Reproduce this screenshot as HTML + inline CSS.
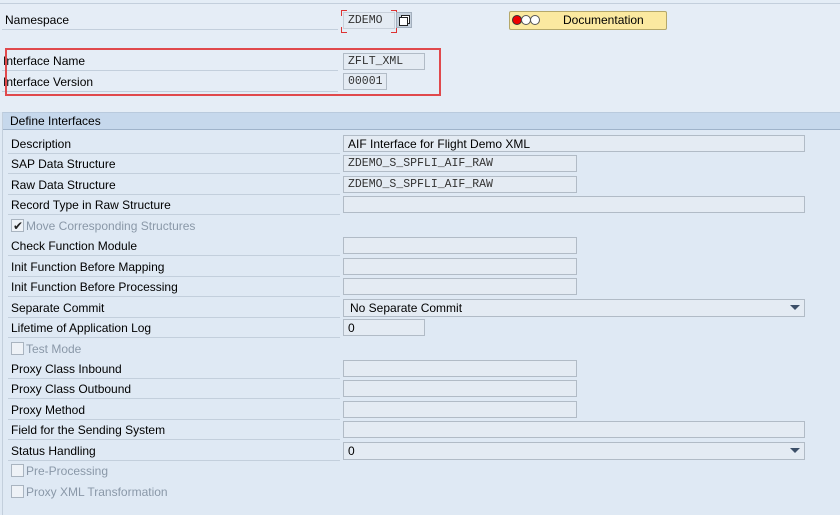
<!DOCTYPE html><html><head><meta charset="utf-8"><style>
body{margin:0;width:840px;height:514px;overflow:hidden;background:#dfe9f4;font-family:"Liberation Sans",sans-serif;font-size:12px;color:#000;position:relative}
.a{position:absolute}
.lbl{position:absolute;left:8px;width:332px;height:19px;line-height:18px;border-bottom:1px solid #c3cfdc;padding-left:3px;box-sizing:border-box}
.top{left:2px;width:336px;padding-left:3px}
.dis{color:#8a98a8;border-bottom:none}
.inp{position:absolute;left:343px;height:16px;background:#e4ebf3;border:1px solid #b1bbc6;box-sizing:border-box;line-height:16px;padding-left:4px;font-size:12px}
.mono{font-family:"Liberation Mono",monospace;font-size:11.5px;color:#333}
.cb{display:inline-block;width:11px;height:11px;border:1px solid #a9b4c0;background:#eef2f7;vertical-align:-2px;margin-right:2px;position:relative}
.dd:after{content:"";position:absolute;right:4px;top:5px;border-left:5px solid transparent;border-right:5px solid transparent;border-top:5px solid #3c4f68}
</style></head><body>
<div class="a" style="left:0;top:0;width:840px;height:3px;border-bottom:1px solid #c3cfdc;background:#e4edf6"></div>
<div class="a" style="left:0;top:4px;width:840px;height:108px;background:#e5edf6"></div>
<div class="lbl top" style="top:11px">Namespace</div>
<div class="inp mono" style="left:343px;top:12px;width:52px;height:17px;border-color:#c8d0da">ZDEMO</div>
<div class="a" style="left:341px;top:10px;width:5px;height:5px;border-left:1px solid #d33;border-top:1px solid #d33"></div>
<div class="a" style="left:341px;top:27px;width:5px;height:5px;border-left:1px solid #d33;border-bottom:1px solid #d33"></div>
<div class="a" style="left:391px;top:10px;width:5px;height:5px;border-right:1px solid #d33;border-top:1px solid #d33"></div>
<div class="a" style="left:391px;top:27px;width:5px;height:5px;border-right:1px solid #d33;border-bottom:1px solid #d33"></div>
<div class="a" style="left:396px;top:12px;width:16px;height:16px;background:#c6d1dd;border:1px solid #a3afbd;box-sizing:border-box"><div class="a" style="left:4px;top:2px;width:7px;height:7px;border:1px solid #222;background:#fff"></div><div class="a" style="left:2px;top:4px;width:7px;height:7px;border:1px solid #222;background:#fff"></div></div>
<div class="a" style="left:509px;top:11px;width:158px;height:19px;background:#fbe9a0;border:1px solid #b5a86a;box-sizing:border-box;border-radius:2px"></div>
<div class="a" style="left:512px;top:15px;width:8px;height:8px;border-radius:50%;background:#e00;border:1px solid #333"></div>
<div class="a" style="left:521px;top:15px;width:8px;height:8px;border-radius:50%;border:1px solid #555;background:#fff"></div>
<div class="a" style="left:530px;top:15px;width:8px;height:8px;border-radius:50%;border:1px solid #555;background:#fff"></div>
<div class="a" style="left:563px;top:13px;font-size:12px">Documentation</div>
<div class="lbl top" style="top:52px;padding-left:1px">Interface Name</div>
<div class="inp mono" style="top:53px;width:82px;height:17px">ZFLT_XML</div>
<div class="lbl top" style="top:73px;padding-left:1px">Interface Version</div>
<div class="inp mono" style="top:73px;width:44px;height:17px">00001</div>
<div class="a" style="left:5px;top:48px;width:436px;height:48px;border:2px solid #e0494c;box-sizing:border-box"></div>
<div class="a" style="left:2px;top:112px;width:838px;height:402px;border-left:1px solid #c3cfdc;border-top:1px solid #b9cadd"></div>
<div class="a" style="left:3px;top:113px;width:837px;height:17px;background:#c6d8ec;border-bottom:1px solid #9fb3ca;box-sizing:border-box;padding-left:7px;line-height:16px">Define Interfaces</div>
<div class="lbl" style="top:135px">Description</div><div class="inp" style="top:135px;width:462px;height:17px">AIF Interface for Flight Demo XML</div>
<div class="lbl" style="top:155px">SAP Data Structure</div><div class="inp mono" style="top:155px;width:234px;height:17px">ZDEMO_S_SPFLI_AIF_RAW</div>
<div class="lbl" style="top:176px">Raw Data Structure</div><div class="inp mono" style="top:176px;width:234px;height:17px">ZDEMO_S_SPFLI_AIF_RAW</div>
<div class="lbl" style="top:196px">Record Type in Raw Structure</div><div class="inp" style="top:196px;width:462px;height:17px"></div>
<div class="lbl dis" style="top:217px"><span class="cb"><span class="a" style="left:1px;top:-3px;color:#222;font-size:12px">✔</span></span>Move Corresponding Structures</div>
<div class="lbl" style="top:237px">Check Function Module</div><div class="inp" style="top:237px;width:234px;height:17px"></div>
<div class="lbl" style="top:258px">Init Function Before Mapping</div><div class="inp" style="top:258px;width:234px;height:17px"></div>
<div class="lbl" style="top:278px">Init Function Before Processing</div><div class="inp" style="top:278px;width:234px;height:17px"></div>
<div class="lbl" style="top:299px">Separate Commit</div><div class="inp dd" style="top:299px;width:462px;height:18px;padding-left:6px">No Separate Commit</div>
<div class="lbl" style="top:319px">Lifetime of Application Log</div><div class="inp" style="top:319px;width:82px;height:17px">0</div>
<div class="lbl dis" style="top:340px"><span class="cb"></span>Test Mode</div>
<div class="lbl" style="top:360px">Proxy Class Inbound</div><div class="inp" style="top:360px;width:234px;height:17px"></div>
<div class="lbl" style="top:380px">Proxy Class Outbound</div><div class="inp" style="top:380px;width:234px;height:17px"></div>
<div class="lbl" style="top:401px">Proxy Method</div><div class="inp" style="top:401px;width:234px;height:17px"></div>
<div class="lbl" style="top:421px">Field for the Sending System</div><div class="inp" style="top:421px;width:462px;height:17px"></div>
<div class="lbl" style="top:442px">Status Handling</div><div class="inp dd" style="top:442px;width:462px;height:18px">0</div>
<div class="lbl dis" style="top:462px"><span class="cb"></span>Pre-Processing</div>
<div class="lbl dis" style="top:483px"><span class="cb"></span>Proxy XML Transformation</div>
</body></html>
